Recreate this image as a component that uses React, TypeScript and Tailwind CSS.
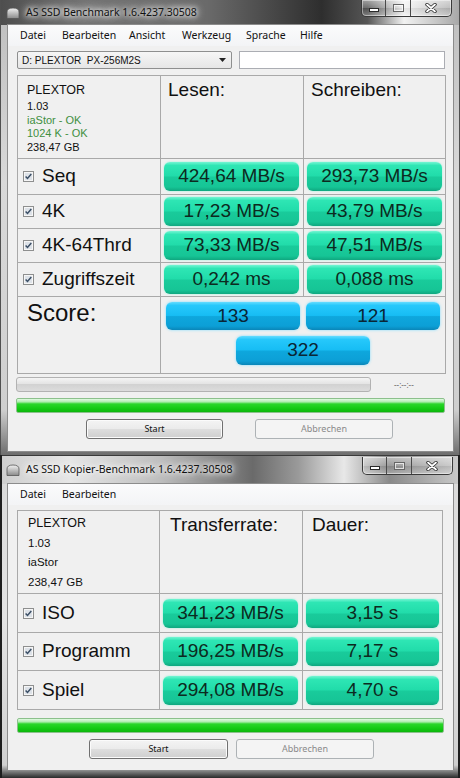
import React from "react"

const sans = "font-['Noto_Sans','Open_Sans',sans-serif]"
const arial = "font-['Liberation_Sans',Arial,sans-serif]"

function WinIcon() {
  return (
    <svg width="14" height="12" viewBox="0 0 14 12" className="shrink-0">
      <defs>
        <linearGradient id="wicon" x1="0" y1="0" x2="0" y2="1">
          <stop offset="0" stopColor="#f2f2f2" />
          <stop offset="1" stopColor="#8a8a8a" />
        </linearGradient>
      </defs>
      <path d="M1 11.5 L1 5 Q1 1 7 1 Q13 1 13 5 L13 11.5 Z" fill="url(#wicon)" stroke="#555" strokeWidth="0.8" />
    </svg>
  )
}

function CaptionButtons({ className }: { className: string }) {
  const glass =
    "flex items-center justify-center bg-[linear-gradient(180deg,rgba(255,255,255,0.45)_0%,rgba(255,255,255,0.15)_50%,rgba(0,0,0,0.05)_51%,rgba(255,255,255,0.25)_100%)]"
  return (
    <div className={`flex rounded-b-[5px] border border-t-0 border-[#3a3a3a] overflow-hidden shadow-[inset_0_0_0_1px_rgba(255,255,255,0.45)] ${className}`}>
      <div className={`${glass} w-[24px] border-r border-[#4a4a4a]`}>
        <div className="w-[10px] h-[4px] bg-white border border-[#2a2a2a] mt-[4px]" />
      </div>
      <div className={`${glass} w-[25px] border-r border-[#4a4a4a]`}>
        <div className="w-[11px] h-[8px] border border-[#666] shadow-[inset_0_0_0_1px_rgba(255,255,255,0.7)]" />
      </div>
      <div className={`${glass} w-[40px]`}>
        <svg width="12" height="10" viewBox="0 0 12 10">
          <path d="M2 1.5 L10 8.5 M10 1.5 L2 8.5" stroke="#2a2a2a" strokeWidth="3.4" strokeLinecap="round" />
          <path d="M2 1.5 L10 8.5 M10 1.5 L2 8.5" stroke="#ffffff" strokeWidth="1.8" strokeLinecap="round" />
        </svg>
      </div>
    </div>
  )
}

function CheckBox() {
  return (
    <svg width="11" height="11" viewBox="0 0 11 11" className="shrink-0">
      <rect x="0.5" y="0.5" width="10" height="10" fill="#f6f6f6" stroke="#8e8f8f" />
      <rect x="2" y="2" width="7" height="7" fill="#dde2e8" />
      <path d="M2.6 5.4 L4.5 7.4 L8.3 3" stroke="#3b4f66" strokeWidth="1.5" fill="none" />
    </svg>
  )
}

function GreenValue({ children }: { children: React.ReactNode }) {
  return (
    <div className={`${arial} flex items-center justify-center w-full h-[29px] rounded-[6px] text-[19px] text-[#0c2a20] bg-[linear-gradient(180deg,#74f5d3_0%,#2ee6b4_12%,#21dcaa_48%,#19cb9b_52%,#16c596_86%,#0fa77f_100%)] shadow-[0_0_2px_#86f2d6]`}>
      {children}
    </div>
  )
}

function BlueValue({ children, className }: { children: React.ReactNode; className: string }) {
  return (
    <div className={`${arial} flex items-center justify-center w-[134px] rounded-[6px] text-[19px] text-[#0a2636] bg-[linear-gradient(180deg,#64dcff_0%,#26c8fb_12%,#17bdf4_48%,#0ea7dd_52%,#0c9fd6_86%,#0a86b8_100%)] shadow-[0_0_3px_#84ddff] ${className}`}>
      {children}
    </div>
  )
}

function LabelCell({ label }: { label: string }) {
  return (
    <div className="flex items-center gap-[8px] pl-[5px] border-r border-b border-[#a9a9a9]">
      <CheckBox />
      <span className={`${arial} text-[19px] text-[#111]`}>{label}</span>
    </div>
  )
}

function ValueCell({ value, last }: { value: string; last?: boolean }) {
  return (
    <div className={`flex items-center border-r border-b border-[#a9a9a9] ${last ? "pl-[3px] pr-[3px]" : "pl-[3px] pr-[4px]"}`}>
      <GreenValue>{value}</GreenValue>
    </div>
  )
}

function Button({ children, disabled, className }: { children: React.ReactNode; disabled?: boolean; className: string }) {
  return (
    <div
      className={`${sans} flex items-center justify-center h-[20px] rounded-[3px] border text-[9px] ${
        disabled
          ? "border-[#adb2b5] bg-[#f4f4f4] text-[#8a8a8a]"
          : "border-[#707070] text-[#111] bg-[linear-gradient(180deg,#f4f4f4_0%,#ebebeb_48%,#dddddd_52%,#cfcfcf_100%)] shadow-[inset_0_0_0_1px_#fbfbfb]"
      } ${className}`}
    >
      {children}
    </div>
  )
}

function GreenBar({ className }: { className: string }) {
  return (
    <div className={`h-[15px] rounded-[2px] border border-[#8cc08c] bg-[linear-gradient(180deg,#e2fae2_0%,#aeecae_22%,#2ad62a_38%,#14cc14_70%,#0cb60c_100%)] ${className}`} />
  )
}

function MenuBar({ items }: { items: [string, number][] }) {
  return (
    <div className={`${sans} flex items-center h-[21px] pl-[12px] text-[10.5px] text-[#111] bg-[linear-gradient(180deg,#fbfbfc,#f3f4f6)]`}>
      {items.map(([t, w]) => (
        <span key={t} style={{ width: w }}>{t}</span>
      ))}
    </div>
  )
}

export default function App() {
  return (
    <div className="w-[460px] h-[778px] overflow-hidden bg-[#cfcfcf]">
      {/* Window 1 */}
      <div className="flex flex-col h-[455px] border-x border-[#505050] bg-[linear-gradient(180deg,#bdbdbd_0%,#d9d9d9_40%,#cfcfcf_90%,#6d6d6d_100%)]">
        <div className="flex h-[25px] bg-[linear-gradient(90deg,#4e4e4e_0%,#747474_18%,#6a6a6a_45%,#2e2e2e_70%,#555_80%,#f2f2f2_88%,#a8a8a8_100%)]">
          <div className="flex items-center gap-[6px] pl-[5px]">
            <WinIcon />
            <span className={`${sans} text-[10.5px] text-[#111] [text-shadow:0_0_4px_#fff,0_0_8px_#fff,0_0_10px_#eee]`}>AS SSD Benchmark 1.6.4237.30508</span>
          </div>
          <CaptionButtons className="ml-auto mr-[7px] h-[17px]" />
        </div>
        <div className="pl-[7px] pr-[6px]">
          <div className="w-[445px] h-[426px] bg-[#f0f0f0] shadow-[0_0_0_1px_#8c8c8c]">
            <MenuBar items={[["Datei", 42], ["Bearbeiten", 67], ["Ansicht", 53], ["Werkzeug", 64], ["Sprache", 54], ["Hilfe", 40]]} />

            <div className="flex mt-[5px] h-[18px] pl-[9px]">
              <div className={`${arial} flex items-center w-[215px] pl-[4px] pr-[5px] border border-[#8e8f8f] rounded-[2px] bg-[linear-gradient(180deg,#f6f6f6,#e6e6e6)] text-[10px] text-[#111]`}>
                <span className="whitespace-pre">D: PLEXTOR  PX-256M2S</span>
                <svg width="7" height="4" viewBox="0 0 7 4" className="ml-auto">
                  <path d="M0 0 L7 0 L3.5 4 Z" fill="#222" />
                </svg>
              </div>
              <div className="ml-[7px] w-[206px] border border-[#abadb3] bg-white" />
            </div>

            <div className="grid grid-cols-[143px_143px_142px] grid-rows-[83px_36px_34px_34px_34px_77px] mt-[6px] ml-[9px] w-[429px] border-l border-t border-[#a9a9a9]">
              <div className={`${arial} pl-[9px] pt-[4px] text-[11px] leading-[13.5px] text-[#111] border-r border-b border-[#a9a9a9]`}>
                <div className="text-[12.5px] leading-[20px]">PLEXTOR</div>
                <div>1.03</div>
                <div className="text-[#3f8f3f]">iaStor - OK</div>
                <div className="text-[#3f8f3f]">1024 K - OK</div>
                <div>238,47 GB</div>
              </div>
              <div className={`${arial} pl-[7px] pt-[3px] text-[19px] leading-[22px] text-[#111] border-r border-b border-[#a9a9a9]`}>Lesen:</div>
              <div className={`${arial} pl-[7px] pt-[3px] text-[19px] leading-[22px] text-[#111] border-r border-b border-[#a9a9a9]`}>Schreiben:</div>

              <LabelCell label="Seq" />
              <ValueCell value="424,64 MB/s" />
              <ValueCell value="293,73 MB/s" last />

              <LabelCell label="4K" />
              <ValueCell value="17,23 MB/s" />
              <ValueCell value="43,79 MB/s" last />

              <LabelCell label="4K-64Thrd" />
              <ValueCell value="73,33 MB/s" />
              <ValueCell value="47,51 MB/s" last />

              <LabelCell label="Zugriffszeit" />
              <ValueCell value="0,242 ms" />
              <ValueCell value="0,088 ms" last />

              <div className={`${arial} pl-[9px] pt-[1px] text-[24px] leading-[30px] text-[#111] border-r border-b border-[#a9a9a9]`}>Score:</div>
              <div className="col-span-2 flex flex-col items-center pt-[5px] gap-[6px] border-r border-b border-[#a9a9a9]">
                <div className="flex gap-[6px]">
                  <BlueValue className="h-[28px]">133</BlueValue>
                  <BlueValue className="h-[28px]">121</BlueValue>
                </div>
                <BlueValue className="h-[29px]">322</BlueValue>
              </div>
            </div>

            <div className="flex items-center mt-[3px] h-[15px] pl-[8px]">
              <div className="w-[355px] h-[15px] rounded-[3px] border border-[#b2b2b2] bg-[linear-gradient(180deg,#f4f4f4_0%,#e4e4e4_45%,#d2d2d2_50%,#dcdcdc_100%)]" />
              <span className={`${sans} ml-[23px] text-[8px] text-[#666]`}>--:--:--</span>
            </div>

            <GreenBar className="mt-[6px] ml-[8px] w-[429px]" />

            <div className="flex mt-[6px]">
              <Button className="ml-[78px] w-[137px]">Start</Button>
              <Button disabled className="ml-[32px] w-[138px]">Abbrechen</Button>
            </div>
          </div>
        </div>
      </div>

      {/* Window 2 */}
      <div className="flex flex-col h-[323px] border-x-[2px] border-[#1e1e1e] bg-[linear-gradient(180deg,#d8d8d8_0%,#e4e4e4_50%,#d0d0d0_96%,#2a2a2a_100%)]">
        <div className="flex h-[29px] border-t border-[#3a3a3a] bg-[linear-gradient(90deg,#cfcfcf_0%,#e6e6e6_15%,#bdbdbd_35%,#6a6a6a_55%,#9a9a9a_65%,#e8e8e8_75%,#8a8a8a_85%,#c8c8c8_100%)]">
          <div className="flex items-center gap-[6px] pl-[4px]">
            <WinIcon />
            <span className={`${sans} text-[10.5px] text-[#111] [text-shadow:0_0_4px_#fff,0_0_8px_#fff,0_0_10px_#eee]`}>AS SSD Kopier-Benchmark 1.6.4237.30508</span>
          </div>
          <CaptionButtons className="ml-auto mr-[5px] mt-[1px] h-[18px]" />
        </div>
        <div className="pl-[6px] pr-[5px]">
          <div className="w-[445px] h-[286px] bg-[#f0f0f0] shadow-[0_0_0_1px_#8c8c8c]">
            <MenuBar items={[["Datei", 42], ["Bearbeiten", 67]]} />

            <div className="grid grid-cols-[142px_143px_140px] grid-rows-[83px_39px_38px_39px] mt-[5px] ml-[9px] w-[426px] border-l border-t border-[#a9a9a9]">
              <div className={`${arial} pl-[10px] pt-[3px] text-[11.5px] leading-[19.5px] text-[#111] border-r border-b border-[#a9a9a9]`}>
                <div className="text-[12.5px]">PLEXTOR</div>
                <div>1.03</div>
                <div>iaStor</div>
                <div>238,47 GB</div>
              </div>
              <div className={`${arial} pl-[10px] pt-[3px] text-[19px] leading-[22px] text-[#111] border-r border-b border-[#a9a9a9]`}>Transferrate:</div>
              <div className={`${arial} pl-[9px] pt-[3px] text-[19px] leading-[22px] text-[#111] border-r border-b border-[#a9a9a9]`}>Dauer:</div>

              <LabelCell label="ISO" />
              <ValueCell value="341,23 MB/s" />
              <ValueCell value="3,15 s" last />

              <LabelCell label="Programm" />
              <ValueCell value="196,25 MB/s" />
              <ValueCell value="7,17 s" last />

              <LabelCell label="Spiel" />
              <ValueCell value="294,08 MB/s" />
              <ValueCell value="4,70 s" last />
            </div>

            <GreenBar className="mt-[8px] ml-[9px] w-[427px]" />

            <div className="flex mt-[6px]">
              <Button className="ml-[81px] w-[139px]">Start</Button>
              <Button disabled className="ml-[8px] w-[138px]">Abbrechen</Button>
            </div>
          </div>
        </div>
      </div>
    </div>
  )
}
